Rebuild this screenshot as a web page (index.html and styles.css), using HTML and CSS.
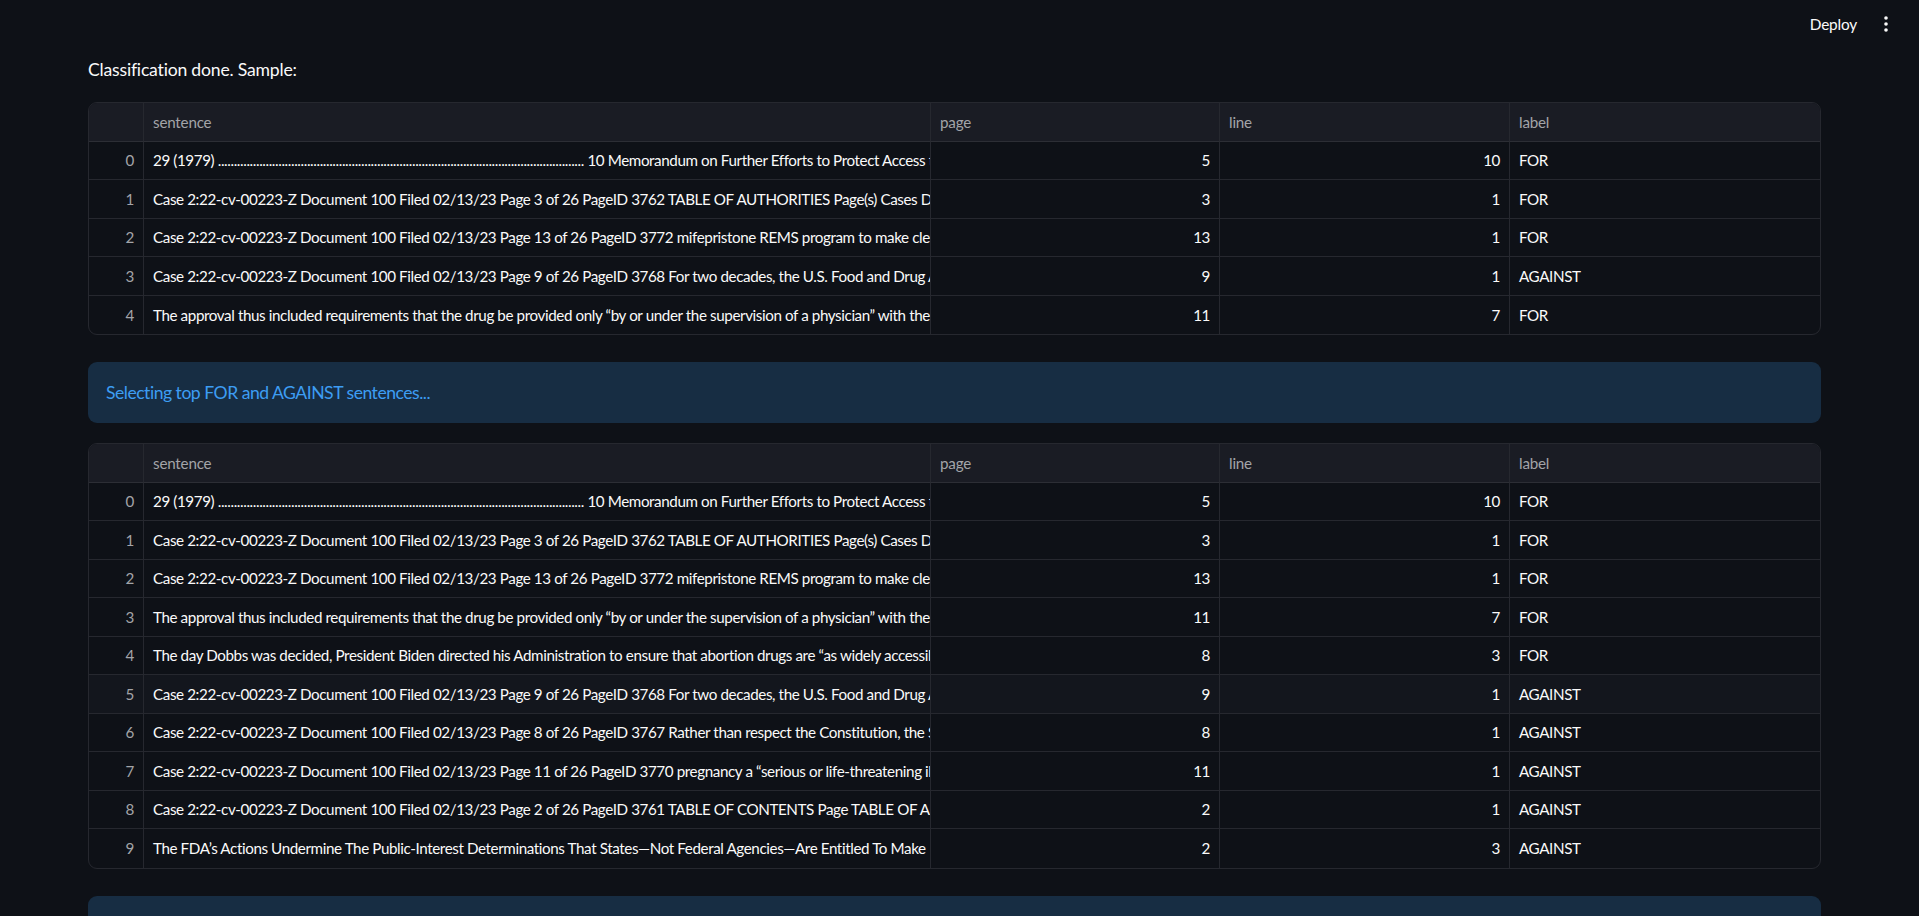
FILE: index.html
```html
<!DOCTYPE html>
<html>
<head>
<meta charset="utf-8">
<link rel="stylesheet" href="styles.css">
</head>
<body>
<header class="topbar">
  <span class="deploy">Deploy</span>
  <span class="menu" aria-label="Main menu">
    <svg width="4" height="16" viewBox="0 0 4 16"><circle cx="2" cy="2" r="1.8" fill="#fafafa"/><circle cx="2" cy="8" r="1.8" fill="#fafafa"/><circle cx="2" cy="14" r="1.8" fill="#fafafa"/></svg>
  </span>
</header>
<main class="main">
  <p class="md">Classification done. Sample:</p>

  <div class="grid">
    <div class="hc idx"></div><div class="hc">sentence</div><div class="hc">page</div><div class="hc">line</div><div class="hc last">label</div>

    <div class="c idx">0</div><div class="c txt">29 (1979) ................................................................................................................... 10 Memorandum on Further Efforts to Protect Access to</div><div class="c num">5</div><div class="c num">10</div><div class="c last">FOR</div>
    <div class="c idx">1</div><div class="c txt">Case 2:22-cv-00223-Z Document 100 Filed 02/13/23 Page 3 of 26 PageID 3762 TABLE OF AUTHORITIES Page(s) Cases Dobbs v.</div><div class="c num">3</div><div class="c num">1</div><div class="c last">FOR</div>
    <div class="c idx">2</div><div class="c txt">Case 2:22-cv-00223-Z Document 100 Filed 02/13/23 Page 13 of 26 PageID 3772 mifepristone REMS program to make clear that</div><div class="c num">13</div><div class="c num">1</div><div class="c last">FOR</div>
    <div class="c idx">3</div><div class="c txt">Case 2:22-cv-00223-Z Document 100 Filed 02/13/23 Page 9 of 26 PageID 3768 For two decades, the U.S. Food and Drug Admin</div><div class="c num">9</div><div class="c num">1</div><div class="c last">AGAINST</div>
    <div class="c idx bl">4</div><div class="c txt bl">The approval thus included requirements that the drug be provided only “by or under the supervision of a physician” with the</div><div class="c num bl">11</div><div class="c num bl">7</div><div class="c last bl">FOR</div>
  </div>

  <div class="info">Selecting top FOR and AGAINST sentences...</div>

  <div class="grid">
    <div class="hc idx"></div><div class="hc">sentence</div><div class="hc">page</div><div class="hc">line</div><div class="hc last">label</div>

    <div class="c idx">0</div><div class="c txt">29 (1979) ................................................................................................................... 10 Memorandum on Further Efforts to Protect Access to</div><div class="c num">5</div><div class="c num">10</div><div class="c last">FOR</div>
    <div class="c idx">1</div><div class="c txt">Case 2:22-cv-00223-Z Document 100 Filed 02/13/23 Page 3 of 26 PageID 3762 TABLE OF AUTHORITIES Page(s) Cases Dobbs v.</div><div class="c num">3</div><div class="c num">1</div><div class="c last">FOR</div>
    <div class="c idx">2</div><div class="c txt">Case 2:22-cv-00223-Z Document 100 Filed 02/13/23 Page 13 of 26 PageID 3772 mifepristone REMS program to make clear that</div><div class="c num">13</div><div class="c num">1</div><div class="c last">FOR</div>
    <div class="c idx">3</div><div class="c txt">The approval thus included requirements that the drug be provided only “by or under the supervision of a physician” with the</div><div class="c num">11</div><div class="c num">7</div><div class="c last">FOR</div>
    <div class="c idx">4</div><div class="c txt">The day Dobbs was decided, President Biden directed his Administration to ensure that abortion drugs are “as widely accessible</div><div class="c num">8</div><div class="c num">3</div><div class="c last">FOR</div>
    <div class="c idx hov">5</div><div class="c txt hov">Case 2:22-cv-00223-Z Document 100 Filed 02/13/23 Page 9 of 26 PageID 3768 For two decades, the U.S. Food and Drug Admin</div><div class="c num hov">9</div><div class="c num hov">1</div><div class="c last hov">AGAINST</div>
    <div class="c idx">6</div><div class="c txt">Case 2:22-cv-00223-Z Document 100 Filed 02/13/23 Page 8 of 26 PageID 3767 Rather than respect the Constitution, the Supreme</div><div class="c num">8</div><div class="c num">1</div><div class="c last">AGAINST</div>
    <div class="c idx">7</div><div class="c txt">Case 2:22-cv-00223-Z Document 100 Filed 02/13/23 Page 11 of 26 PageID 3770 pregnancy a “serious or life-threatening illness”</div><div class="c num">11</div><div class="c num">1</div><div class="c last">AGAINST</div>
    <div class="c idx">8</div><div class="c txt">Case 2:22-cv-00223-Z Document 100 Filed 02/13/23 Page 2 of 26 PageID 3761 TABLE OF CONTENTS Page TABLE OF AUTHORITIES</div><div class="c num">2</div><div class="c num">1</div><div class="c last">AGAINST</div>
    <div class="c idx bl">9</div><div class="c txt bl">The FDA’s Actions Undermine The Public-Interest Determinations That States—Not Federal Agencies—Are Entitled To Make</div><div class="c num bl">2</div><div class="c num bl">3</div><div class="c last bl">AGAINST</div>
  </div>

  <div class="info tail"></div>
</main>
</body>
</html>
```

FILE: styles.css
```css
* { box-sizing: border-box; }
html, body { margin: 0; padding: 0; }
body {
  background: #0e1117;
  color: #fafafa;
  font-family: "Lato", "Noto Sans", sans-serif;
  height: 916px;
  overflow: hidden;
}
.topbar {
  height: 48px;
  display: flex;
  align-items: center;
  justify-content: flex-end;
  padding-right: 19px;
}
.deploy {
  font-size: 15.4px;
  color: #fafafa;
  margin-right: 15px;
  letter-spacing: -0.2px;
}
.menu {
  width: 28px;
  height: 28px;
  display: flex;
  align-items: center;
  justify-content: center;
}
.main {
  margin-left: 88px;
  width: 1733px;
  padding-top: 8px;
  display: flex;
  flex-direction: column;
}
.md {
  margin: 0 0 18px 0;
  font-size: 17.6px;
  line-height: 28px;
  height: 28px;
  letter-spacing: -0.2px;
}
.grid {
  display: grid;
  grid-template-columns: 55px 787px 289px 290px 310px;
  grid-auto-rows: 38.5px;
  border: 1px solid #26282f;
  border-radius: 9px;
  overflow: hidden;
  margin-bottom: 27px;
  font-size: 15.2px;
  letter-spacing: -0.4px;
}
.hc {
  background: #1a1c24;
  color: #a3a4a8;
  border-right: 1px solid #26282f;
  border-bottom: 1px solid #2c2e35;
  padding: 0 9px;
  display: flex;
  align-items: center;
  white-space: nowrap;
  letter-spacing: -0.2px;
}
.c {
  border-right: 1px solid #26282f;
  border-bottom: 1px solid #26282f;
  padding: 0 9px;
  display: flex;
  align-items: center;
  white-space: nowrap;
  overflow: hidden;
}
.last { border-right: none; }
.bl { border-bottom: none; }
.idx { justify-content: flex-end; color: #a3a4a8; }
.num { justify-content: flex-end; }
.txt { padding-right: 0; }
.hov { background: #13161d; }
.info {
  background: #172d43;
  color: #3d9df3;
  border-radius: 9px;
  font-size: 17.6px;
  line-height: 28px;
  padding: 16.5px 18px;
  margin-bottom: 20px;
  letter-spacing: -0.5px;
}
.tail { height: 61px; }
```
